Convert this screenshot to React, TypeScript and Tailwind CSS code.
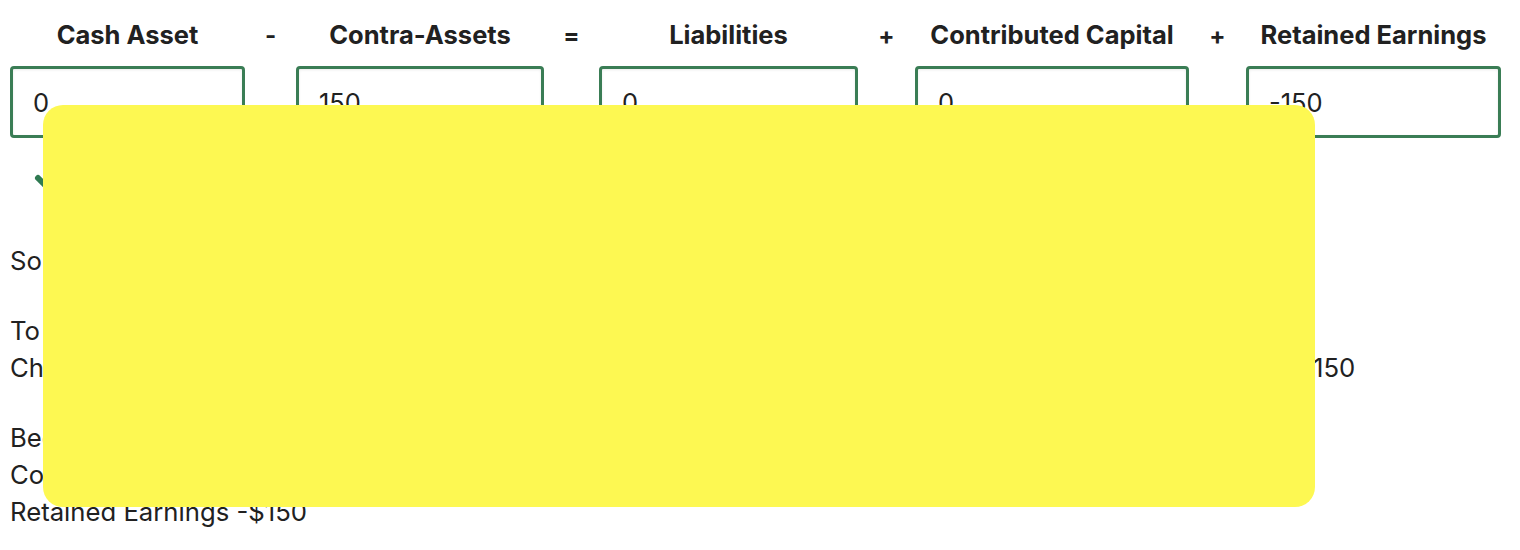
import React from 'react';
import { Check } from 'lucide-react';

const columns = [
  { label: 'Cash Asset', value: '0' },
  { op: '-' },
  { label: 'Contra-Assets', value: '150' },
  { op: '=' },
  { label: 'Liabilities', value: '0' },
  { op: '+' },
  { label: 'Contributed Capital', value: '0' },
  { op: '+' },
  { label: 'Retained Earnings', value: '-150' },
];

const App = () => {
  return (
    <div className="relative min-h-screen bg-white px-[10px] pt-[18px] text-[#212121] font-['Inter','Noto_Sans',sans-serif]">
      {/* Equation row */}
      <div className="grid grid-cols-[235px_51px_248px_55px_259px_57px_274px_57px_255px]">
        {columns.map((col, i) =>
          col.op ? (
            <div key={i} className="flex justify-center pt-[1px] text-[24px] font-bold leading-[34px]">
              {col.op}
            </div>
          ) : (
            <div key={i} className="flex flex-col items-center">
              <div className="text-[25.5px] font-bold leading-[34px] whitespace-nowrap">{col.label}</div>
              <input
                readOnly
                value={col.value}
                className="mt-[14px] h-[72px] w-full rounded-[4px] border-[3px] border-[#3a7d55] px-[20px] text-[25.5px] text-[#212121] shadow-[inset_0_1px_3px_rgba(0,0,0,0.08)] outline-none"
              />
            </div>
          )
        )}
      </div>

      {/* Result icon */}
      <div className="pl-[22px] pt-[22px]">
        <Check size={36} strokeWidth={4} className="text-[#2f7a52]" />
      </div>

      {/* Explanation */}
      <div className="mt-[46px] text-[25.7px] leading-[37px]">
        <p>So the equation balances after the adjustment has been recorded.</p>
        <p className="mt-[33px]">To summarize, the expense recognized this period is $150</p>
        <p className="whitespace-nowrap">Change in Contra-Assets is $150 and the change in Retained Earnings from the recognized expense was -$150</p>
        <p className="mt-[33px]">Beginning Cash $0</p>
        <p>Contributed Capital $0</p>
        <p>Retained Earnings -$150</p>
      </div>

      {/* Redaction box */}
      <div className="absolute left-[43px] top-[105px] h-[402px] w-[1272px] rounded-[20px] bg-[#fdf852]" />
    </div>
  );
};

export default App;
